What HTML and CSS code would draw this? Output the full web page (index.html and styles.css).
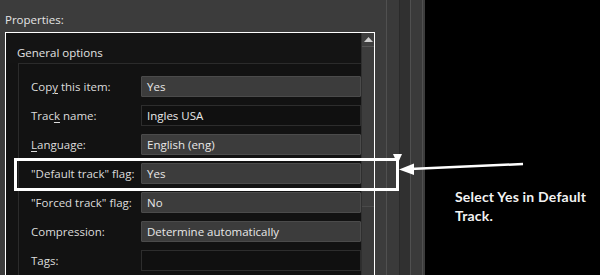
FILE: index.html
```html
<!DOCTYPE html>
<html>
<head>
<meta charset="utf-8">
<link rel="stylesheet" href="styles.css">
</head>
<body>
<div class="screen">
  <div class="app">
    <div class="main">
      <div class="title">Properties:</div>
      <div class="panel">
        <div class="content">
          <div class="section-title">General options</div>
          <div class="group">
            <div class="row"><span class="label">Cop<u>y</u> this item:</span><div class="field combo">Yes</div></div>
            <div class="row"><span class="label">Trac<u>k</u> name:</span><div class="field input">Ingles USA</div></div>
            <div class="row"><span class="label"><u>L</u>anguage:</span><div class="field combo">English (eng)</div></div>
            <div class="row"><span class="label">"Default track" flag:</span><div class="field combo">Yes</div></div>
            <div class="row"><span class="label">"Forced track" flag:</span><div class="field combo">No</div></div>
            <div class="row"><span class="label">Compression:</span><div class="field combo">Determine automatically</div></div>
            <div class="row"><span class="label">Tags:</span><div class="field input"></div></div>
          </div>
        </div>
        <div class="scrollbar">
          <div class="scroll-btn">
            <svg width="9" height="5" viewBox="0 0 9 5"><polygon points="0,5 9,5 4.5,0" fill="#cfcfcf"/></svg>
          </div>
          <div class="thumb"></div>
        </div>
      </div>
    </div>
    <div class="stripes">
      <div class="s s-line"></div>
      <div class="s s-a"></div>
      <div class="s s-dark-line"></div>
      <div class="s s-b"></div>
      <div class="s s-line"></div>
      <div class="s s-c"></div>
      <div class="s s-line"></div>
      <div class="s s-d"></div>
    </div>
  </div>
  <div class="dark">
    <p class="note">Select Yes in Default<br>Track.</p>
  </div>
  <svg class="overlay" width="600" height="275" viewBox="0 0 600 275">
    <rect x="15.5" y="159.5" width="382" height="30" fill="none" stroke="#ffffff" stroke-width="3"/>
    <polygon points="393,154 402,154 397.5,164" fill="#ffffff"/>
    <line x1="523" y1="164" x2="410" y2="169" stroke="#ffffff" stroke-width="2.5"/>
    <polygon points="399,169.5 414,163.5 414,175" fill="#ffffff"/>
  </svg>
</div>
</body>
</html>
```
FILE: styles.css
```css
* { box-sizing: border-box; }
html, body { margin: 0; padding: 0; }
body {
  background: #000;
  width: 600px;
  height: 275px;
  overflow: hidden;
  font-family: "Open Sans", "Noto Sans", sans-serif;
  font-size: 11.5px;
  color: #dedede;
}
.screen {
  position: relative;
  display: flex;
  width: 600px;
  height: 275px;
}
.app {
  display: flex;
  width: 425px;
  height: 275px;
  background: #3c3c3c;
}
.main {
  width: 386px;
  display: flex;
  flex-direction: column;
  padding-left: 5px;
}
.title {
  height: 32px;
  padding-top: 10px;
  line-height: 19px;
  color: #e4e4e4;
}
.panel {
  width: 370px;
  flex: 1;
  display: flex;
  border: 1px solid #ffffff;
  border-bottom: none;
  background: #131313;
}
.content {
  flex: 1;
  display: flex;
  flex-direction: column;
}
.section-title {
  height: 30px;
  padding-top: 10px;
  padding-left: 11px;
  line-height: 19px;
  color: #e2e2e2;
  background: #141414;
}
.group {
  flex: 1;
  margin-left: 12px;
  border-top: 1px solid #2b2b2b;
  border-left: 1px solid #2b2b2b;
  padding-top: 12px;
  padding-left: 12px;
  display: flex;
  flex-direction: column;
  gap: 8px;
  background: #121212;
}
.row {
  display: flex;
  height: 21px;
  align-items: center;
}
.label {
  width: 110px;
  flex: none;
  color: #dcdcdc;
  white-space: nowrap;
}
.label u { text-underline-offset: 2px; }
.field {
  flex: 1;
  height: 21px;
  line-height: 19px;
  padding-left: 5px;
  color: #e8e8e8;
  white-space: nowrap;
}
.combo {
  background: #3c3c3c;
  border: 1px solid #4b4b4b;
  border-radius: 1px;
}
.input {
  background: #101010;
  border: 1px solid #2d2d2d;
}
.scrollbar {
  width: 13px;
  flex: none;
  display: flex;
  flex-direction: column;
  background: #3a3a3a;
  border-left: 1px solid #2f2f2f;
}
.scroll-btn {
  height: 14px;
  display: flex;
  align-items: center;
  justify-content: center;
  background: #3f3f3f;
  border-bottom: 1px solid #555;
}
.thumb {
  height: 160px;
  background: #3d3d3d;
  border-bottom: 1px solid #4a4a4a;
}
.stripes {
  flex: 1;
  display: flex;
}
.s { height: 100%; flex: none; }
.s-line { width: 1px; background: #505050; }
.s-dark-line { width: 1px; background: #2a2a2a; }
.s-a { width: 12px; background: #3a3a3a; }
.s-b { width: 10px; background: #303030; }
.s-c { width: 11px; background: #3a3a3a; }
.s-d { width: 2px; background: #3c3c3c; }
.dark {
  flex: 1;
  background: #000;
  padding-left: 30px;
  padding-top: 187px;
}
.note {
  margin: 0;
  font-family: "Lato", "Open Sans", sans-serif;
  font-weight: 700;
  font-size: 14px;
  line-height: 19px;
  color: #f2f2f2;
  letter-spacing: 0.2px;
}
.overlay {
  position: absolute;
  left: 0;
  top: 0;
  pointer-events: none;
}
```
